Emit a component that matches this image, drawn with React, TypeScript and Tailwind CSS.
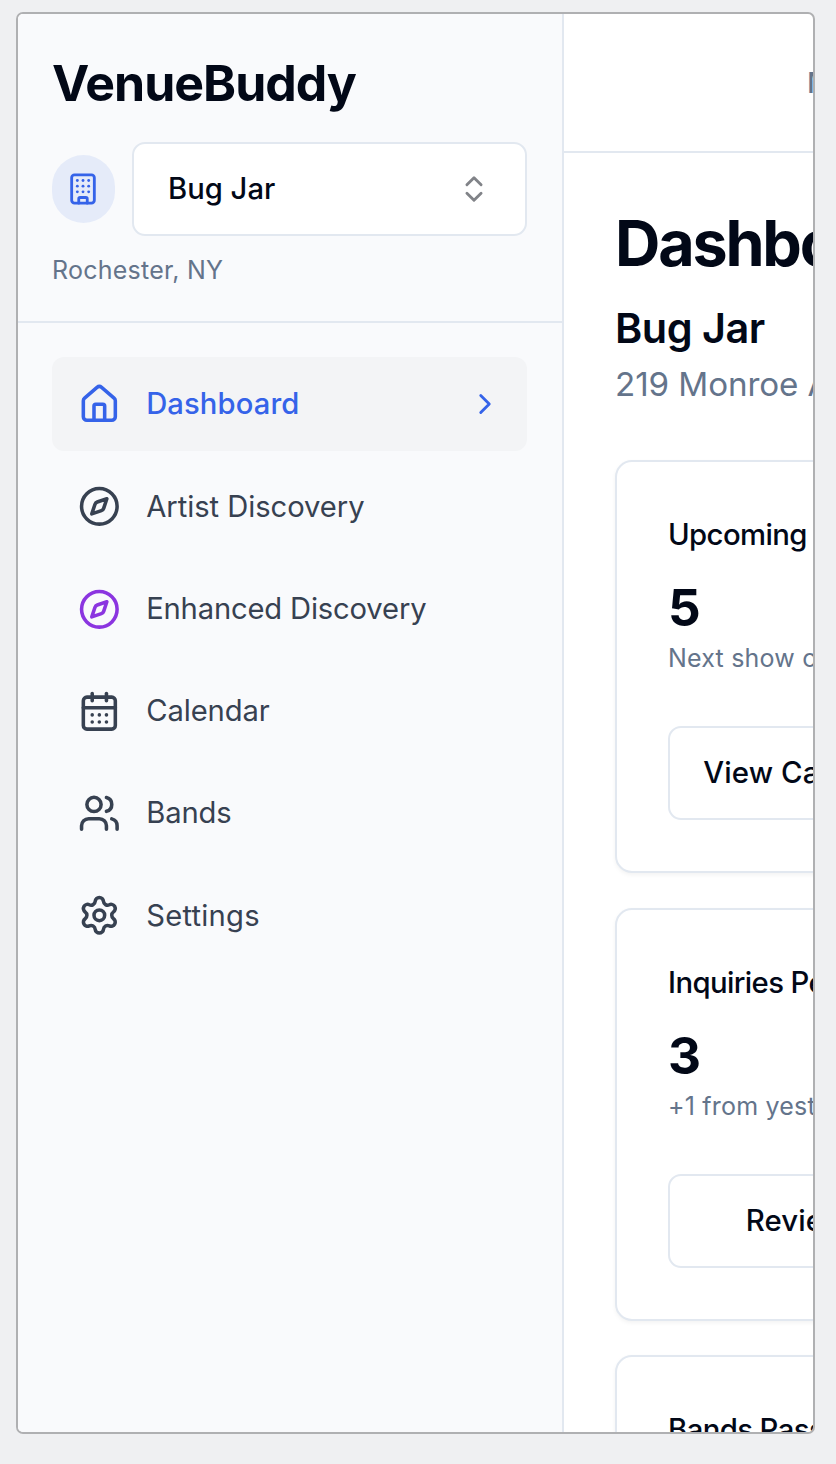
import {
  Building,
  CalendarDays,
  ChevronRight,
  ChevronsUpDown,
  Compass,
  House,
  Settings,
  Users,
  type LucideIcon,
} from "lucide-react";

type NavItem = {
  label: string;
  icon: LucideIcon;
  iconClass: string;
  labelClass: string;
  active?: boolean;
};

const navItems: NavItem[] = [
  { label: "Dashboard", icon: House, iconClass: "text-[#3563e9]", labelClass: "text-[#3563e9] font-medium tracking-[0.12px]", active: true },
  { label: "Artist Discovery", icon: Compass, iconClass: "text-[#374151]", labelClass: "text-[#374151] tracking-[-0.05px]" },
  { label: "Enhanced Discovery", icon: Compass, iconClass: "text-[#8b35e0]", labelClass: "text-[#374151] tracking-[-0.17px]" },
  { label: "Calendar", icon: CalendarDays, iconClass: "text-[#374151]", labelClass: "text-[#374151] tracking-[-0.1px]" },
  { label: "Bands", icon: Users, iconClass: "text-[#374151]", labelClass: "text-[#374151] tracking-[-0.1px]" },
  { label: "Settings", icon: Settings, iconClass: "text-[#374151]", labelClass: "text-[#374151] tracking-[0.25px]" },
];

type Stat = { title: string; value: string; note: string; action: string; actionClass: string };

const stats: Stat[] = [
  { title: "Upcoming Shows", value: "5", note: "Next show on Friday", action: "View Calendar", actionClass: "" },
  { title: "Inquiries Pending", value: "3", note: "+1 from yesterday", action: "Review", actionClass: "pr-[19px]" },
  { title: "Bands Passing Through", value: "8", note: "In the next month", action: "Discover", actionClass: "" },
];

function NavRow({ item }: { item: NavItem }) {
  const Icon = item.icon;
  return (
    <a className={`flex h-[93.6px] items-center rounded-[12px] pl-[25.5px] pr-[25px] ${item.active ? "bg-[#f3f4f6]" : ""}`}>
      <Icon className={`mt-px size-[42.67px] shrink-0 ${item.iconClass}`} strokeWidth={2} />
      <span className={`ml-[26px] flex-1 pt-px text-[29.2px] leading-[42px] ${item.labelClass}`}>{item.label}</span>
      {item.active && <ChevronRight className="size-[34px] shrink-0 text-[#3563e9]" strokeWidth={2} />}
    </a>
  );
}

function StatCard({ stat }: { stat: Stat }) {
  return (
    <section className="h-[413px] w-[382px] shrink-0 rounded-[17px] border-2 border-[#e2e8f0] bg-white p-[51px] shadow-[0_2px_4px_rgba(0,0,0,0.05)]">
      <h3 className="text-[29.3px] font-medium leading-[43px] tracking-[-0.6px]">{stat.title}</h3>
      <p className="mt-[17px] pt-px text-[51.2px] font-bold leading-[67px]">{stat.value}</p>
      <p className="text-[25px] leading-[34px] tracking-[0.2px] text-[#64748b]">{stat.note}</p>
      <button
        className={`mt-[51px] flex h-[94px] w-full items-center justify-center rounded-[13px] border-2 border-[#e2e8f0] bg-white text-[29.4px] font-medium tracking-[0.1px] ${stat.actionClass}`}
      >
        {stat.action}
      </button>
    </section>
  );
}

export default function App() {
  return (
    <div className="h-[1464px] w-[836px] overflow-hidden bg-[#eff0f2] pl-4 pt-3 font-['Inter','Liberation_Sans',sans-serif] text-[#020817]">
      <div className="flex h-[1422px] w-[799px] overflow-hidden rounded-[7px] border-2 border-[#afb0b2] bg-white">
        <aside className="w-[546px] shrink-0 border-r-2 border-[#e2e8f0] bg-[#f9fafc]">
          <div className="h-[309px] border-b-2 border-[#e2e8f0] pl-[34px] pr-[35px] pt-[35px]">
            <h1 className="whitespace-nowrap text-[50px] font-bold leading-[68px] tracking-[-1px]">VenueBuddy</h1>
            <div className="mt-[25px] flex items-center">
              <div className="flex h-[68px] w-[63px] items-center justify-center rounded-full bg-[#e5ebf9] pr-px">
                <Building className="size-[34px] text-[#3563e9]" strokeWidth={2} />
              </div>
              <button className="ml-[17px] flex h-[94px] flex-1 items-center justify-between rounded-[13px] border-2 border-[#e2e8f0] bg-white pl-[34px] pr-[34px] text-[29.2px] font-medium tracking-[0px]">
                Bug Jar
                <ChevronsUpDown className="size-[34px] text-[#818388]" strokeWidth={2} />
              </button>
            </div>
            <p className="mt-[17px] text-[25px] leading-[34px] tracking-[0.25px] text-[#64748b]">Rochester, NY</p>
          </div>
          <nav className="flex flex-col gap-[8.7px] pl-[34px] pr-[35px] pt-[34px]">
            {navItems.map((item) => (
              <NavRow key={item.label} item={item} />
            ))}
          </nav>
        </aside>
        <main className="min-w-0 flex-1 overflow-hidden">
          <header className="flex h-[139px] items-center whitespace-nowrap border-b-2 border-[#e2e8f0] pl-[243px] text-[29px] font-medium text-[#64748b]">
            Messages
          </header>
          <div className="w-[485px] whitespace-nowrap px-[51px] pt-[52px]">
            <h2 className="text-[62.8px] font-bold leading-[77px] tracking-[-2.2px]">Dashboard</h2>
            <p className="mt-[16px] text-[41.4px] font-semibold leading-[60px] tracking-[-0.5px]">Bug Jar</p>
            <p className="pt-px text-[33.2px] leading-[50px] tracking-[-0.1px] text-[#64748b]">219 Monroe Avenue</p>
            <div className="mt-[51px] flex flex-col gap-[34.6px]">
              {stats.map((stat) => (
                <StatCard key={stat.title} stat={stat} />
              ))}
            </div>
          </div>
        </main>
      </div>
    </div>
  );
}
